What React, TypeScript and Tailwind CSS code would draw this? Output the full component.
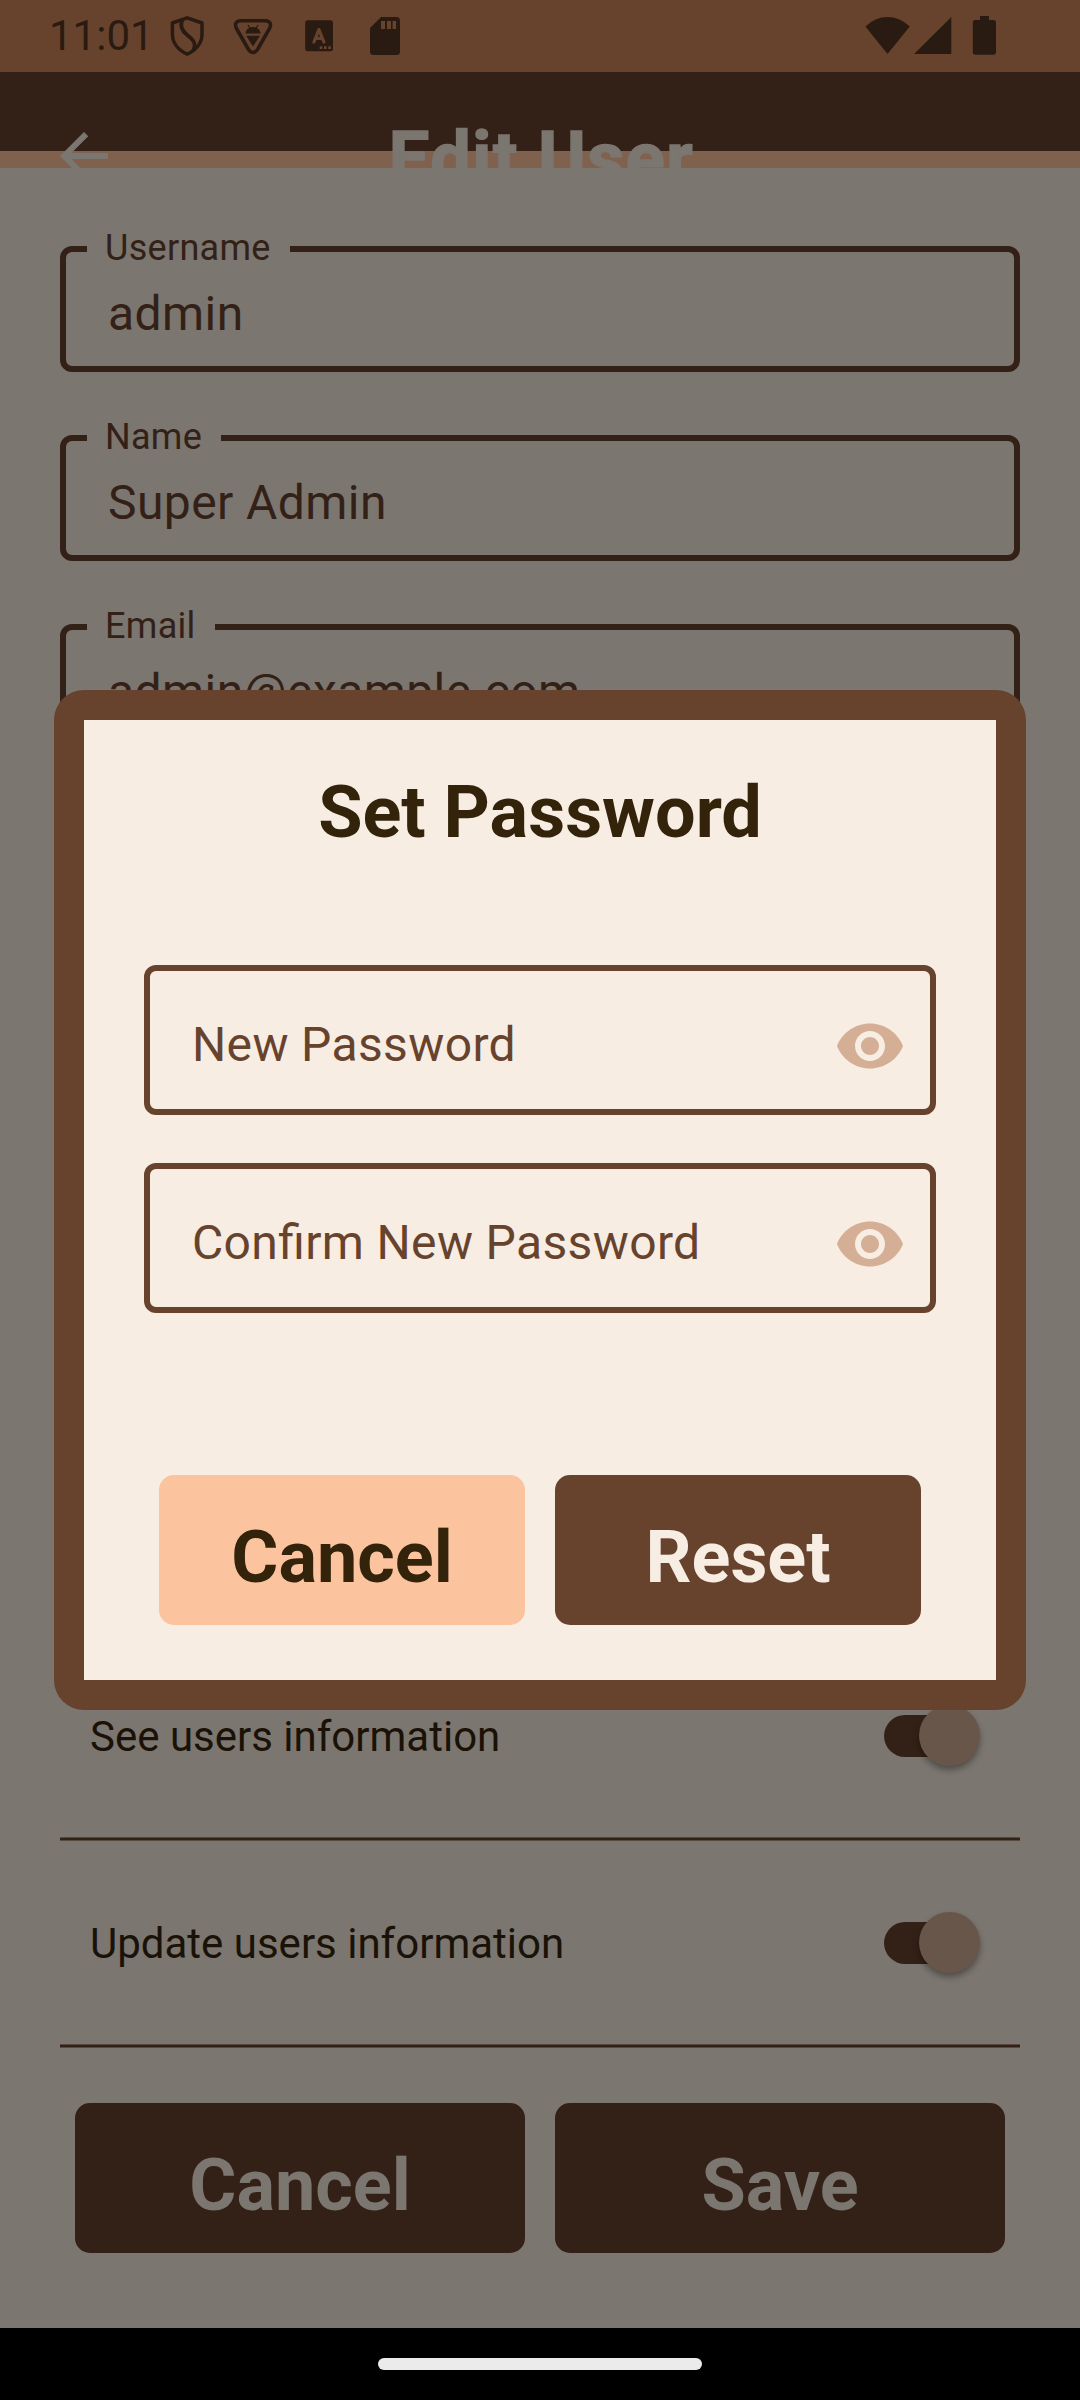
import React from "react";

const FONT = "font-['Roboto','Noto_Sans',sans-serif]";

function StatusBar() {
  return (
    <div className="flex h-[72px] items-start bg-[#67432E] text-[#2A1B12]">
      <span className="ml-[49px] mt-[12px] w-[101px] text-[42px] leading-[48px] whitespace-nowrap">11:01</span>
      <svg className="h-[72px] w-[260px]" viewBox="150 0 260 72" fill="none" stroke="currentColor">
        <path d="M187.200 17.800 L202 23 V34 C202 43.500 195.500 50.500 187.200 54.200 C179 50.500 172.400 43.500 172.400 34 V23 Z" strokeWidth="3.500" strokeLinejoin="round" />
        <path d="M182.500 19.500 C179.500 26 181.500 30.500 187.200 35 C194.500 40.500 196.500 44.500 193 51" strokeWidth="3.800" />
        <path d="M240 20.800 H266 Q272.500 22 269.500 28.500 L257.500 49.500 Q253 55.500 248.500 49.500 L236.500 28.500 Q233.500 22 240 20.800 Z" strokeWidth="3.600" strokeLinejoin="round" />
        <path d="M245.500 33.600 C246 24.800 260 24.800 260.500 33.600 Z M246.200 35.800 H260 L253 46.600 Z" fill="currentColor" stroke="none" />
        <path d="M248 25 L250 28.500 M258 25 L256 28.500" strokeWidth="1.300" />
        <rect x="305.200" y="20.300" width="27.800" height="31" rx="2.500" fill="currentColor" stroke="none" />
        <path d="M313.900 42 L318.900 29.600 L323.900 42 M315.500 38.300 H322.300" stroke="#67432E" strokeWidth="3.200" strokeLinecap="round" strokeLinejoin="round" />
        <path d="M319.700 46.300 h2.600 v2.600 h-2.600z M324 46.300 h2.600 v2.600 h-2.600z M328.300 46.300 h2.600 v2.600 h-2.600z" fill="#67432E" stroke="none" />
        <path fillRule="evenodd" d="M381 17 H396.500 Q400 17 400 20.500 V51.500 Q400 55 396.500 55 H373.500 Q370 55 370 51.500 V28 Z M381 21 V29 H385 V21 Z M387 21 V29 H391 V21 Z M392.600 21 V29 H396 V21 Z" fill="currentColor" stroke="none" />
      </svg>
      <svg className="ml-auto mr-[80px] h-[72px] w-[160px]" viewBox="840 0 160 72" fill="currentColor">
        <path d="M865.400 26.500 Q875 17 887.500 17 Q900 17 909.800 26.500 L887.500 54 Z" />
        <path d="M951.300 17 V54 H914 Z" />
        <path d="M980 16 H989 V20 H993.500 Q996 20 996 22.500 V52 Q996 54.700 993.500 54.700 H975.300 Q972.800 54.700 972.800 52 V22.500 Q972.800 20 975.300 20 H980 Z" />
      </svg>
    </div>
  );
}

function Header() {
  return (
    <header className="h-24 overflow-hidden bg-[linear-gradient(#332117_79px,#80614E_79px)] text-[#7B766F]">
      <div className="relative flex h-[168px] items-center justify-center">
        <svg className="absolute left-[48px] top-[48px] size-[72px]" viewBox="0 0 24 24" fill="currentColor">
          <path d="M20 11H7.830l5.590-5.590L12 4l-8 8 8 8 1.410-1.410L7.830 13H20v-2z" />
        </svg>
        <h1 className="pt-[5px] pl-[3px] text-[72px] leading-[84px] font-bold tracking-[1.55px] whitespace-nowrap [-webkit-text-stroke:1.6px_#7B766F]">
          Edit User
        </h1>
      </div>
    </header>
  );
}

function OutlinedField({ label, value }: { label: string; value: string }) {
  return (
    <div className="relative flex h-[126px] items-center rounded-[12px] border-[6px] border-[#332117] pl-[42px] pt-[9px] text-[48px] text-[#332117]">
      <span className="absolute left-[21px] -top-[25px] h-[42px] bg-[#7B766F] pl-[18px] pr-[19px] text-[36px] leading-[42px] tracking-[0.3px]">
        {label}
      </span>
      <span className="leading-[56px] tracking-[0.42px]">{value}</span>
    </div>
  );
}

function PermissionRow({ label }: { label: string }) {
  return (
    <>
      <div className="flex h-[203px] items-center justify-between pl-[30px] pr-[40px]">
        <span className="pt-[2px] text-[42px] leading-[48px] text-[#1A1207]">{label}</span>
        <div className="flex h-[42px] w-[96px] items-center justify-end rounded-full bg-[linear-gradient(90deg,#332117_70px,transparent_70px)]">
          <div className="size-[61px] shrink-0 rounded-full bg-[#675649] shadow-[0_4px_6px_rgba(0,0,0,0.35)]" />
        </div>
      </div>
      <div className="h-1 border-y border-[#59483D] bg-[#332117]" />
    </>
  );
}

function PasswordField({ label }: { label: string }) {
  return (
    <div className="flex h-[150px] items-center justify-between rounded-[12px] border-[6px] border-[#67432E] pl-[42px] pr-[24px]">
      <span className="pt-[9px] text-[48px] leading-[56px] tracking-[0.36px] text-[#67432E] [font-feature-settings:'liga'_1]">
        {label}
      </span>
      <svg className="mt-[11px] size-[72px]" viewBox="0 0 24 24" fill="#D5AF95">
        <path d="M12 4.500C7 4.500 2.730 7.610 1 12c1.730 4.390 6 7.500 11 7.500s9.270-3.110 11-7.500c-1.730-4.390-6-7.500-11-7.500zM12 17c-2.760 0-5-2.240-5-5s2.240-5 5-5 5 2.240 5 5-2.240 5-5 5zm0-8c-1.660 0-3 1.340-3 3s1.340 3 3 3 3-1.340 3-3-1.340-3-3-3z" />
      </svg>
    </div>
  );
}

const BUTTON =
  "flex h-[150px] flex-1 items-center justify-center rounded-[15px] pt-[15px] text-[72px] leading-[84px] font-bold";

function PasswordDialog() {
  return (
    <div
      role="dialog"
      className="absolute left-[54px] top-[690px] h-[1020px] w-[972px] rounded-[30px] bg-[#67432E] p-[30px]"
    >
      <div className="h-full bg-[#F7EDE2] px-[60px] pt-[51px]">
        <h2 className="text-center text-[72px] leading-[84px] font-bold text-[#33230B]">Set Password</h2>
        <div className="mt-[110px] flex flex-col gap-12">
          <PasswordField label="New Password" />
          <PasswordField label="Confirm New Password" />
        </div>
        <div className="mt-[162px] flex gap-[30px] px-[15px]">
          <button className={BUTTON + " bg-[#FBC39E] text-[#33230B]"}>Cancel</button>
          <button className={BUTTON + " bg-[#67432E] text-[#F7EDE2]"}>Reset</button>
        </div>
      </div>
    </div>
  );
}

export default function App() {
  return (
    <div className={"relative flex h-[2400px] w-[1080px] flex-col overflow-hidden bg-[#7B766F] " + FONT}>
      <StatusBar />
      <Header />
      <main className="flex flex-1 flex-col px-[60px] pt-[78px] pb-[75px]">
        <div className="flex flex-col gap-[63px]">
          <OutlinedField label="Username" value="admin" />
          <OutlinedField label="Name" value="Super Admin" />
          <OutlinedField label="Email" value="admin@example.com" />
        </div>
        <div className="mt-auto">
          <PermissionRow label="See users information" />
          <PermissionRow label="Update users information" />
        </div>
        <div className="mt-[55px] flex gap-[30px] px-[15px] text-[#7B766F]">
          <button className={BUTTON + " bg-[#332117]"}>Cancel</button>
          <button className={BUTTON + " bg-[#332117]"}>Save</button>
        </div>
      </main>
      <nav className="flex h-[72px] items-center justify-center bg-black">
        <div className="h-3 w-[324px] rounded-full bg-[#EBEBEB]" />
      </nav>
      <PasswordDialog />
    </div>
  );
}
